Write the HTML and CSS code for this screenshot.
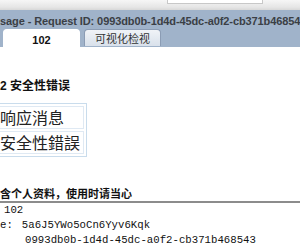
FILE: index.html
```html
<!DOCTYPE html>
<html>
<head>
<meta charset="utf-8">
<link rel="stylesheet" href="styles.css">
</head>
<body>
<div class="page">
  <div class="topstrip"><div class="inputbox"></div></div>
  <div class="titlebar">
    <div class="title">sage - Request ID: 0993db0b-1d4d-45dc-a0f2-cb371b468543</div>
    <div class="tabs">
      <div class="tab active">102</div>
      <div class="tab">可视化检视</div>
    </div>
  </div>
  <div class="content">
    <div class="heading">2 安全性错误</div>
    <table class="msg">
      <tr><td>响应消息</td></tr>
      <tr><td>安全性錯誤</td></tr>
    </table>
    <div class="warn">含个人资料，使用时请当心</div>
    <div class="raw">
      <div class="line l1">102</div>
      <div class="line l2"><span class="lbl">e:</span><span class="val">5a6J5YWo5oCn6Yyv6Kqk</span></div>
      <div class="line l3">0993db0b-1d4d-45dc-a0f2-cb371b468543</div>
    </div>
  </div>
</div>
</body>
</html>
```
FILE: styles.css
```css
html, body {
  margin: 0;
  padding: 0;
  background: #ffffff;
}
.page {
  width: 300px;
  height: 250px;
  overflow: hidden;
  font-family: "Liberation Sans", Arial, "Noto Sans CJK SC", sans-serif;
}
.topstrip {
  height: 10px;
  background: linear-gradient(#f6f6f6, #e6e6e6 70%, #d8d8d8);
  display: flex;
}
.inputbox {
  margin-left: 167px;
  width: 94px;
  height: 3px;
  background: #ffffff;
  border: 1px solid #c8c8c8;
  border-top: none;
}
.titlebar {
  height: 37px;
  background: #a0b3ca;
  display: flex;
  flex-direction: column;
  justify-content: space-between;
  overflow: hidden;
}
.title {
  white-space: nowrap;
  font-size: 11px;
  letter-spacing: -0.1px;
  font-weight: bold;
  color: #3b3f45;
  padding-top: 5px;
  line-height: 13px;
}
.tabs {
  display: flex;
  gap: 4px;
  padding-left: 3px;
}
.tab {
  width: 75px;
  height: 15px;
  padding-top: 1px;
  border: 1px solid #8b9cb4;
  border-bottom: none;
  border-radius: 4px 4px 0 0;
  background: linear-gradient(#f0f3f7, #d9e1eb);
  font-family: "Noto Sans CJK SC", sans-serif;
  font-size: 11px;
  color: #333;
  text-align: center;
  line-height: 15px;
}
.tab.active {
  background: #ffffff;
  border-color: #ffffff;
  font-family: "Liberation Sans", Arial, sans-serif;
  font-weight: bold;
  color: #111;
  padding-top: 3px;
  height: 14px;
  line-height: 14px;
}
.content {
  padding-top: 32px;
}
.heading {
  font-family: "Liberation Sans", "Noto Sans CJK SC", sans-serif;
  font-weight: bold;
  font-size: 12px;
  line-height: 14px;
  color: #111;
}
.msg {
  margin-top: 10px;
  border: 1px solid #c9dcec;
  border-spacing: 2px;
  border-collapse: separate;
  margin-left: -4px;
}
.msg td {
  border: 1px solid #dfe9f3;
  font-family: "Noto Sans CJK SC", sans-serif;
  font-size: 16px;
  line-height: 21px;
  padding: 0 3px 0 0;
  color: #222;
}
.warn {
  margin-top: 30px;
  font-family: "Noto Sans CJK SC", sans-serif;
  font-weight: bold;
  font-size: 11px;
  line-height: 13px;
  color: #111;
  padding-bottom: 1px;
  border-bottom: 2px solid #8c8c8c;
}
.raw {
  font-family: "Liberation Mono", monospace;
  font-size: 10.7px;
  line-height: 15px;
  color: #111;
  margin-top: 0;
}
.line {
  white-space: pre;
}
.l1 { padding-left: 4px; }
.l2 .val { margin-left: 9px; }
.l3 { padding-left: 25px; }
```
